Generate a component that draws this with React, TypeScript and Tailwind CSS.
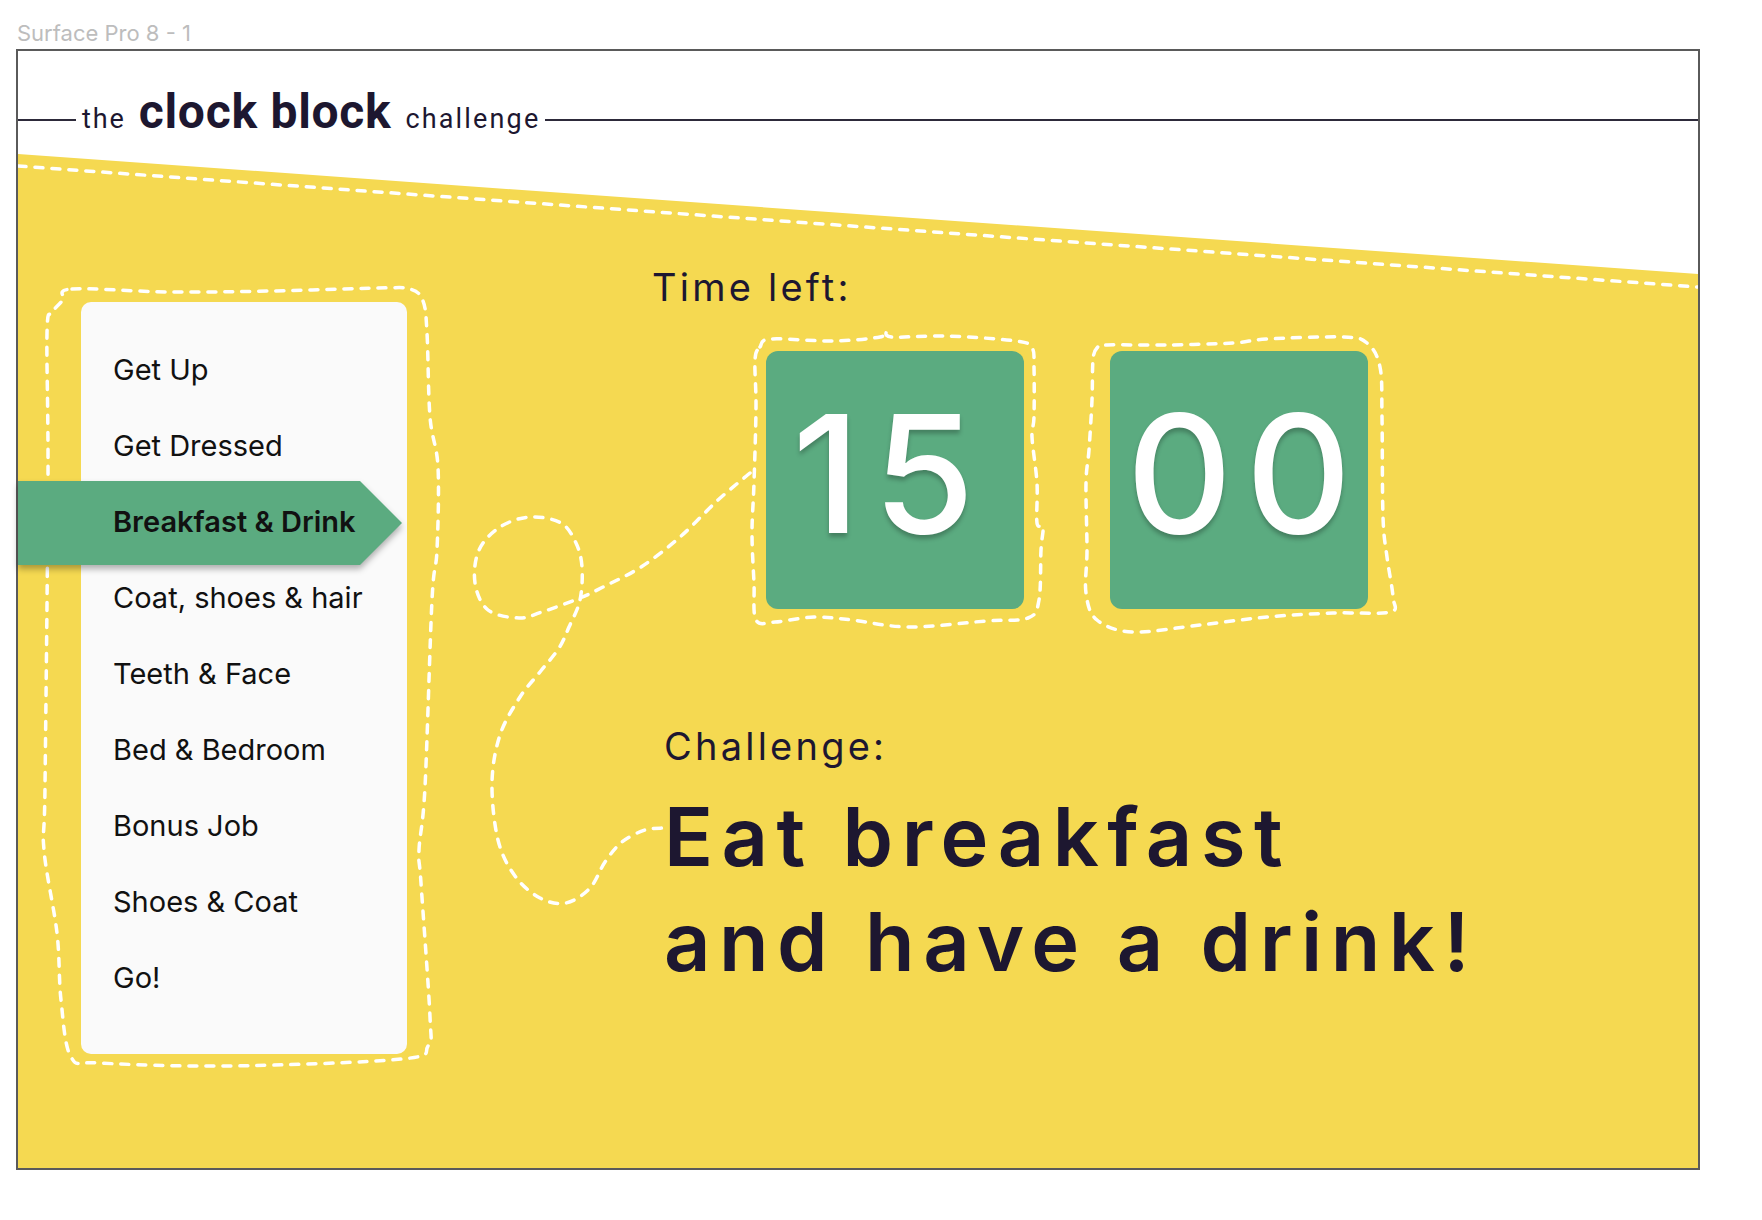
import React from "react";

type Pt = [number, number];

// catmull-rom -> cubic bezier, for the hand drawn dashed outlines
function smooth(pts: Pt[], closed = false) {
  const n = pts.length;
  const get = (i: number) =>
    closed ? pts[(i + n) % n] : pts[Math.max(0, Math.min(n - 1, i))];
  let d = `M ${pts[0][0]} ${pts[0][1]}`;
  const segs = closed ? n : n - 1;
  for (let i = 0; i < segs; i++) {
    const p0 = get(i - 1);
    const p1 = get(i);
    const p2 = get(i + 1);
    const p3 = get(i + 2);
    const c1x = p1[0] + (p2[0] - p0[0]) / 6;
    const c1y = p1[1] + (p2[1] - p0[1]) / 6;
    const c2x = p2[0] - (p3[0] - p1[0]) / 6;
    const c2y = p2[1] - (p3[1] - p1[1]) / 6;
    d += ` C ${c1x} ${c1y} ${c2x} ${c2y} ${p2[0]} ${p2[1]}`;
  }
  return closed ? d + " Z" : d;
}

const cardOutline: Pt[] = [
  [72, 289], [170, 292], [270, 291], [378, 288], [410, 289], [423, 301],
  [427, 333], [430, 417], [438, 467], [437, 550], [432, 600], [425, 787],
  [419, 850], [421, 883], [430, 1017], [428, 1046], [402, 1059], [230, 1066],
  [100, 1063], [71, 1057], [61, 1000], [57, 933], [44, 850], [45, 787],
  [48, 483], [47, 333], [52, 313], [63, 300],
];

const minutesOutline: Pt[] = [
  [760, 347], [771, 339], [833, 341], [880, 337], [886, 331], [892, 337],
  [947, 336], [1016, 341], [1032, 348], [1034, 367], [1034, 417], [1032, 437],
  [1037, 483], [1037, 523], [1043, 527], [1041, 550], [1039, 600], [1028, 618],
  [986, 621], [909, 627], [852, 620], [814, 617], [775, 622], [756, 620],
  [754, 583], [752, 533], [754, 483], [756, 407], [755, 360],
];

const secondsOutline: Pt[] = [
  [1097, 348], [1093, 360], [1092, 400], [1089, 450], [1086, 483], [1087, 550],
  [1086, 593], [1097, 620], [1133, 632], [1200, 625], [1267, 617], [1333, 613],
  [1390, 612], [1393, 597], [1387, 557], [1383, 517], [1382, 417], [1380, 367],
  [1367, 343], [1343, 337], [1267, 339], [1233, 343], [1167, 345], [1107, 345],
];

const connector: Pt[] = [
  [750, 473], [718, 500], [680, 537], [641, 567], [603, 587], [580, 598],
  [542, 612], [519, 618], [488, 610], [475, 583], [479, 550], [500, 527],
  [530, 517], [561, 523], [576, 543], [582, 567], [580, 600], [569, 627],
  [559, 648], [540, 672], [520, 697], [500, 735], [492, 783], [498, 840],
  [515, 876], [540, 898], [566, 903], [590, 888], [605, 862], [622, 842],
  [645, 830], [664, 828],
];

const tasks = [
  "Get Up",
  "Get Dressed",
  "Breakfast & Drink",
  "Coat, shoes & hair",
  "Teeth & Face",
  "Bed & Bedroom",
  "Bonus Job",
  "Shoes & Coat",
  "Go!",
];

const ACTIVE = 2;

function Decor() {
  const dash = {
    fill: "none",
    stroke: "#ffffff",
    strokeWidth: 3.5,
    strokeDasharray: "8 9",
    strokeLinecap: "round" as const,
  };
  return (
    <svg className="pointer-events-none absolute inset-0" width="1762" height="1220">
      <polygon points="18,154 1698,274 1698,1168 18,1168" fill="#F5D951" />
      <line x1="18" y1="166" x2="1698" y2="287" {...dash} />
      <path d={smooth(cardOutline, true)} {...dash} />
      <path d={smooth(minutesOutline, true)} {...dash} />
      <path d={smooth(secondsOutline, true)} {...dash} />
      <path d={smooth(connector)} {...dash} />
    </svg>
  );
}

function TimeBox({ value, shift }: { value: string; shift: string }) {
  return (
    <div
      className={
        "flex h-[258px] w-[258px] items-center justify-center rounded-[12px] bg-[#5BAB80] pb-[12px] text-[164px] font-medium leading-none tracking-[0.08em] text-white [text-shadow:0_4px_4px_rgba(0,0,0,0.25)] " +
        shift
      }
    >
      {value}
    </div>
  );
}

export default function App() {
  return (
    <div className="relative h-[1220px] w-[1762px] overflow-hidden bg-white pl-4 pt-5 [font-family:Inter,sans-serif]">
      <Decor />

      <div className="relative pl-px text-[22px] leading-[26px] text-[#bdbdbd]">Surface Pro 8 - 1</div>

      <div className="relative mt-[3px] h-[1121px] w-[1684px] border-2 border-[#5a5a5a]">
        {/* title bar */}
        <div className="flex h-[84px] items-start">
          <div className="mt-[68px] h-[1.5px] w-[58px] bg-[#2d2a3a]" />
          <div className="ml-[6px] mt-[37px] flex items-baseline whitespace-nowrap text-[48px] leading-none text-[#1d1730] [font-family:Roboto,sans-serif]">
            <span className="mr-[13px] text-[27px] tracking-[0.07em]">the</span>
            <span className="font-bold tracking-[0.015em]">clock block</span>
            <span className="ml-[14px] text-[27px] tracking-[0.08em]">challenge</span>
          </div>
          <div className="ml-[5px] mt-[68px] h-[1.5px] flex-1 bg-[#2d2a3a]" />
        </div>

        <div className="flex items-start">
          {/* task list */}
          <div className="ml-[63px] mt-[167px] h-[752px] w-[326px] rounded-[10px] bg-[#fafafa] pl-[32px] pt-[30px]">
            {tasks.map((t, i) => (
              <div key={t} className="relative flex h-[76px] items-center text-[29px] text-[#111]">
                {i === ACTIVE && (
                  <div className="absolute left-[-95px] top-[-3px] drop-shadow-[0_4px_3px_rgba(0,0,0,0.3)]">
                    <div className="h-[84px] w-[384px] bg-[#5BAB80] [clip-path:polygon(0_0,342px_0,384px_42px,342px_84px,0_84px)]" />
                  </div>
                )}
                <span className={i === ACTIVE ? "relative font-semibold" : "relative"}>{t}</span>
              </div>
            ))}
          </div>

          {/* timer + challenge */}
          <div className="ml-[245px] mt-[129px] text-[#1d1730]">
            <p className="whitespace-nowrap text-[38px] leading-[46px] tracking-[0.085em]">Time left:</p>
            <div className="ml-[114px] mt-[41px] flex gap-[86px]">
              <TimeBox value="15" shift="pr-[10px]" />
              <TimeBox value="00" shift="pl-[13px]" />
            </div>
            <p className="ml-[12px] mt-[114px] whitespace-nowrap text-[38px] leading-[46px] tracking-[0.085em]">Challenge:</p>
            <h1 className="ml-[12px] mt-[16px] whitespace-nowrap text-[81px] font-semibold leading-[105px] tracking-[0.105em]">
              Eat breakfast
              <br />
              and have a drink!
            </h1>
          </div>
        </div>
      </div>
    </div>
  );
}
